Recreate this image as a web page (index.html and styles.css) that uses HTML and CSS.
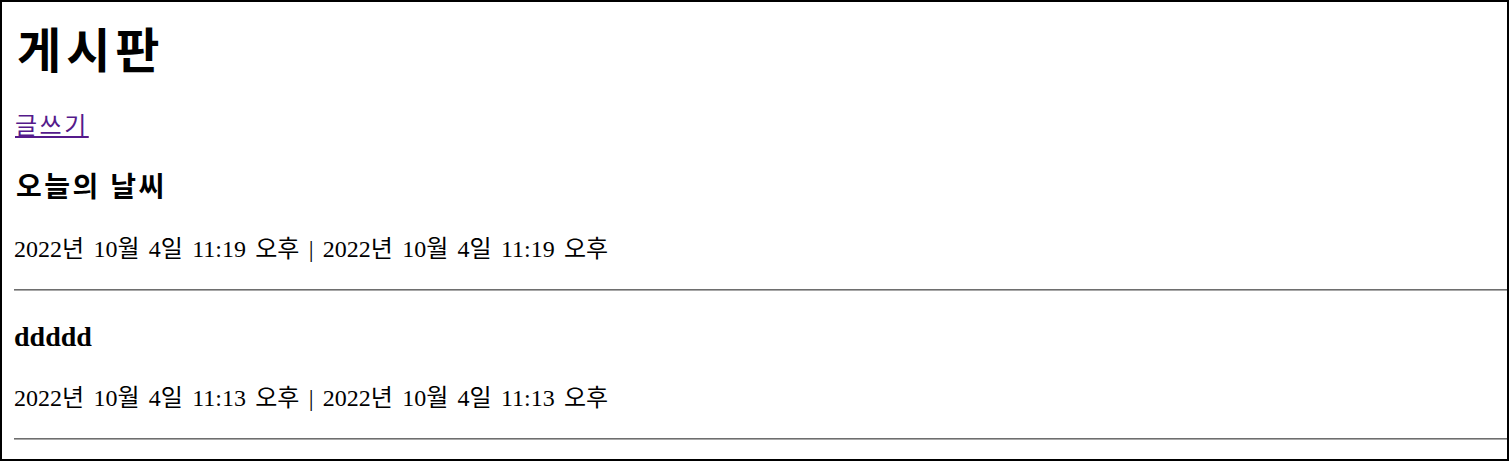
FILE: index.html
```html
<!DOCTYPE html>
<html lang="ko">
<head>
<meta charset="utf-8">
<title>게시판</title>
<link rel="stylesheet" href="styles.css">
</head>
<body>
<div class="frame">
  <h1 class="title">게시판</h1>
  <p class="write"><a class="write-link" href="#">글쓰기</a></p>
  <div class="post">
    <h3 class="post-title post-title-ko">오늘의 날씨</h3>
    <p class="post-date">2022년 10월 4일 11:19 오후 | 2022년 10월 4일 11:19 오후</p>
    <hr class="divider">
  </div>
  <div class="post">
    <h3 class="post-title">ddddd</h3>
    <p class="post-date">2022년 10월 4일 11:13 오후 | 2022년 10월 4일 11:13 오후</p>
    <hr class="divider">
  </div>
</div>
</body>
</html>
```
FILE: styles.css
```css
html, body {
  margin: 0;
  padding: 0;
  background: #fff;
}

.frame {
  box-sizing: border-box;
  height: 461px;
  border: 2px solid #000;
  padding: 0 0 0 12px;
  font-family: "Liberation Serif", "Noto Sans CJK KR", serif;
  font-size: 24px;
  color: #000;
  overflow: hidden;
}

.title {
  font-size: 48px;
  line-height: 54px;
  font-weight: bold;
  letter-spacing: 5px;
  margin: 23px 0 32px 3px;
}

.write {
  margin: 0 0 28px;
  line-height: 31px;
}

.write-link {
  color: #551a8b;
  text-decoration: underline;
  letter-spacing: 2.5px;
  margin-left: 1px;
}

.post-title {
  font-size: 28px;
  line-height: 36px;
  font-weight: bold;
  margin: 0 0 28px;
}

.post-title-ko {
  letter-spacing: 2.5px;
  margin-left: 2px;
}

.post-date {
  margin: 0 0 24px;
  line-height: 31px;
  word-spacing: 3.3px;
}

.divider {
  height: 0;
  margin: 0 0 28px;
  border: none;
  border-top: 1px solid #6e6e6e;
  border-bottom: 1px solid #a8a8a8;
}
```
